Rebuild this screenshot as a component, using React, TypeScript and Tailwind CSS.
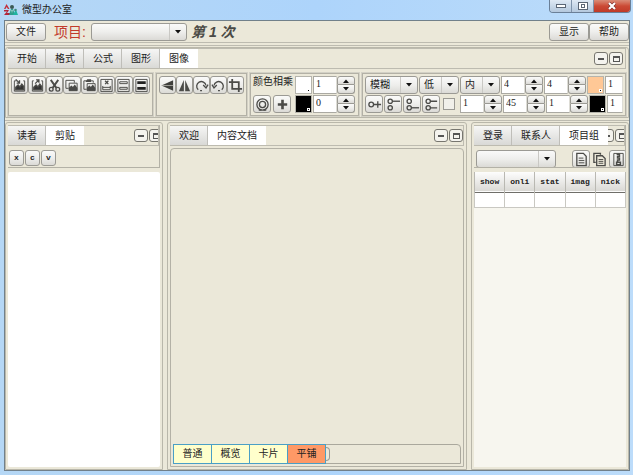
import React from "react";
import clsx from "clsx";

const raised = "border border-[#9b9a94] rounded-[3px] bg-linear-to-b from-[#fafaf9] via-[#eeeeec] to-[#dbdad6]";

const Button: React.FC<{ label: string; className?: string; children: React.ReactNode }> = ({ label, className, children }) => (
  <button type="button" aria-label={label} className={clsx(raised, "flex shrink-0 items-center justify-center", className)}>
    {children}
  </button>
);

const Arrow: React.FC<{ up?: boolean }> = ({ up }) => (
  <svg viewBox="0 0 6 4" className="h-1 w-1.5" fill="#111">
    <path d={up ? "M0 4L3 0.5L6 4Z" : "M0 0L3 3.5L6 0Z"} />
  </svg>
);

const Select: React.FC<{ label: string; value?: string; className: string }> = ({ label, value = "", className }) => (
  <div className={clsx(raised, "relative flex h-[18px] shrink-0", className)}>
    <select aria-label={label} className="w-full appearance-none bg-transparent pr-4 pl-1 text-[10px] leading-4 outline-none">
      <option>{value}</option>
    </select>
    <span className="pointer-events-none absolute inset-y-0 right-0 flex w-[17px] items-center justify-center border-l border-[#c9c8c4]">
      <Arrow />
    </span>
  </div>
);

const Field: React.FC<{ label: string; value: string }> = ({ label, value }) => (
  <input
    aria-label={label}
    defaultValue={value}
    className="h-[18px] w-6 min-w-0 border border-[#aaa9a2] border-r-[#dddcd5] bg-white px-0.5 pb-1 font-['Liberation_Serif',serif] text-[10px] leading-3 outline-none"
  />
);

const Spinner: React.FC<{ label: string; value: string }> = ({ label, value }) => (
  <div className="flex h-[18px] w-[42px] shrink-0">
    <Field label={label} value={value} />
    <div className="flex w-[18px] shrink-0 flex-col">
      <Button label={label + " +"} className="h-[9px] rounded-b-none">
        <Arrow up />
      </Button>
      <Button label={label + " -"} className="h-[9px] rounded-t-none border-t-0">
        <Arrow />
      </Button>
    </div>
  </div>
);

const Swatch: React.FC<{ label: string; color: string }> = ({ label, color }) => (
  <button type="button" aria-label={label} className={clsx("flex h-[18px] w-[17px] shrink-0 items-end justify-end border border-[#b5b4ac] p-px", color)}>
    <span className="size-[3px] border border-white bg-black" />
  </button>
);

const WindowButtons: React.FC<{ className?: string }> = ({ className }) => (
  <div className={clsx("flex shrink-0 items-center gap-px overflow-hidden", className)}>
    <button type="button" aria-label="最小化" className="flex h-[13px] w-3.5 shrink-0 items-center justify-center rounded-[3px] border border-[#77766f] bg-[#f4f3ee]">
      <span className="h-0.5 w-1.5 bg-[#555]" />
    </button>
    <button type="button" aria-label="最大化" className="flex h-[13px] w-3.5 shrink-0 items-center justify-center rounded-[3px] border border-[#77766f] bg-[#f4f3ee]">
      <span className="h-1.5 w-[7px] border border-t-2 border-[#555]" />
    </button>
  </div>
);

const Tabs: React.FC<{ tabs: string[]; active: number; buttons?: string }> = ({ tabs, active, buttons }) => (
  <div className="flex h-[21px] border-y border-r border-[#bdbbb0]">
    <div role="tablist" className="flex shrink-0">
      {tabs.map((tab, i) => (
        <button
          key={tab}
          type="button"
          role="tab"
          aria-selected={i === active}
          className={clsx(
            "border-r pr-2 pl-[9px] text-[10px] leading-4",
            i === active ? "border-white bg-white" : "border-[#bfbeb9] bg-linear-to-b from-[#f6f6f5] to-[#d9d9d6]"
          )}
        >
          {tab}
        </button>
      ))}
    </div>
    <div className="flex min-w-0 flex-1 justify-end overflow-hidden">
      <WindowButtons className={buttons} />
    </div>
  </div>
);

const Glyph: React.FC<{ children: React.ReactNode }> = ({ children }) => (
  <svg viewBox="0 0 16 16" className="size-[15px] shrink-0" fill="none" stroke="#4b4b48" strokeWidth="1.4">
    {children}
  </svg>
);

const picture = "M4 12.5V10L6.5 7.5L8.5 9.5L10.5 6.5L12.5 9V12.5Z";

const editIcons = [
  { label: "插入图片", icon: <><path d="M5 3H2.5V14H13.5V3H12" strokeWidth="1" /><path d={picture} fill="#333" /><path d="M4 1.5L8 5.5M8 2.5V5.5H5" /></> },
  { label: "导出图片", icon: <><path d="M4 3H2.5V14H13.5V3H12" strokeWidth="1" /><path d={picture} fill="#333" /><path d="M5.5 6L9.5 2M6.5 2H9.5V5" /></> },
  { label: "剪切", icon: <><path d="M4 2L10 10.5M12 2L6 10.5" strokeWidth="2" /><circle cx="4.5" cy="12" r="2" /><circle cx="11.5" cy="12" r="2" /></> },
  { label: "复制", icon: <><path d="M5 11H2V2.5H11V5" strokeWidth="1" /><path d="M5.5 5.5H14V13.5H5.5Z" strokeWidth="1" /><path d="M6 13V10.5L8 9L9.5 10.5L11.5 8L13.5 11V13Z" fill="#4b4b48" /></> },
  { label: "粘贴", icon: <><path d="M5 12H2V3H12V5" strokeWidth="1" /><path d="M5 3.5H9V2H6Z" fill="#4b4b48" /><path d="M5.5 6H14V13.5H5.5Z" strokeWidth="1" /><path d="M6 13V10.5L8 9L9.5 10.5L11.5 8L13.5 11V13Z" fill="#4b4b48" /></> },
  { label: "删除", icon: <><path d="M2 1.5H14V14.5H2Z" strokeWidth="1" /><path d="M6.5 3L10 6.5M10 3L6.5 6.5" /><path d="M4 8.5V12.5H12V8.5M4 10H12" strokeWidth="1" /></> },
  { label: "行距", icon: <><path d="M2 1.5H14V14.5H2Z" strokeWidth="1" /><path d="M4 4H12V6H4ZM4 10H12V12H4Z" strokeWidth="1" /></> },
  { label: "边框", icon: <><path d="M2 1.5H14V14.5H2Z" strokeWidth="1" /><path d="M3.5 5H12.5M3.5 11H12.5" strokeWidth="3" stroke="#222" /></> },
];

const transformIcons = [
  { label: "垂直翻转", icon: <><path d="M14 2.5V13.5L1.5 8Z" fill="#3f3f3c" stroke="none" /><path d="M2 8H14" stroke="#a3a39e" strokeWidth="1" /></> },
  { label: "水平翻转", icon: <><path d="M7.3 2V14H2Z" fill="#4b4b48" stroke="none" /><path d="M8.7 2V14H14Z" fill="#4b4b48" stroke="none" /></> },
  { label: "向右旋转", icon: <><path d="M4.5 12.5A5 5 0 1 1 12.8 8" /><path d="M9.8 7.5L12.8 10.5L15 7" /><path d="M6.5 13.5H8.5" /></> },
  { label: "向左旋转", icon: <><path d="M11.5 12.5A5 5 0 1 0 3.2 8" /><path d="M6.2 7.5L3.2 10.5L1 7" /><path d="M7.5 13.5H9.5" /></> },
  { label: "裁剪", icon: <path d="M4.5 1V11.5H15M1 4.5H11.5V15" strokeWidth="1.9" /> },
];

const nodeIcons = [
  { label: "添加节点", icon: <><circle cx="4.5" cy="8" r="2.5" /><path d="M7 8H15M11.5 4.5V11.5" /></> },
  { label: "上节点", icon: <><circle cx="4.5" cy="4.5" r="2.3" /><circle cx="4.5" cy="11.5" r="2.3" /><path d="M7 4.5H15" /></> },
  { label: "下节点", icon: <><circle cx="4.5" cy="4.5" r="2.3" /><circle cx="4.5" cy="11.5" r="2.3" /><path d="M7 11.5H15" /></> },
  { label: "双节点", icon: <><circle cx="4.5" cy="4.5" r="2.3" /><circle cx="4.5" cy="11.5" r="2.3" /><path d="M7 4.5H14M7 11.5H14" /></> },
];

const IconRow: React.FC<{ icons: { label: string; icon: React.ReactNode }[] }> = ({ icons }) => (
  <div className="flex">
    {icons.map(({ label, icon }) => (
      <Button key={label} label={label} className="h-[18px] flex-1">
        <Glyph>{icon}</Glyph>
      </Button>
    ))}
  </div>
);

const group = "border border-[#b3b1a6] shadow-[0_0_0_1px_#d3d1c6] p-0.5";
const panel = "flex min-w-0 flex-col rounded-t-[3px] border border-[#b9b7aa] p-0.5";

const TitleBar: React.FC = () => (
  <header className="flex h-5 shrink-0 items-start justify-between px-0.5">
    <h1 className="flex items-center gap-1 pt-0.5 pl-0.5 text-[10px] leading-4">
      <svg viewBox="0 0 14 12" className="h-3 w-3.5">
        <path d="M0 5L2.5 0L5.5 5H4L2.5 3L1.5 5Z" fill="#c22f3b" />
        <path d="M0 6H5L3 9H6V11H0L3 7.5H0Z" fill="#b3263a" />
        <circle cx="8" cy="3" r="2" fill="#3b5a55" />
        <path d="M5 11L7 5H9L11 11Z" fill="#2e9e8b" />
        <circle cx="11.5" cy="6" r="1.3" fill="#3c8c7b" />
        <path d="M9 11L11 7H12.5L14 11Z" fill="#1fb3a0" />
        <path d="M7.5 6L8.5 6L8 9Z" fill="#fff" />
      </svg>
      微型办公室
    </h1>
    <div className="flex h-[13px] overflow-hidden rounded-b-[4px] border border-t-0 border-[#6a7f97]">
      <button type="button" aria-label="最小化窗口" className="flex w-[22px] items-center justify-center border-r border-[#7f93ab] bg-linear-to-b from-[#dfe9f4] to-[#b4c8dd]">
        <span className="h-1 w-2.5 border border-[#5b6675] bg-white" />
      </button>
      <button type="button" aria-label="最大化窗口" className="flex w-[22px] items-center justify-center border-r border-[#7f93ab] bg-linear-to-b from-[#dfe9f4] to-[#b4c8dd]">
        <span className="flex h-2 w-2.5 items-center justify-center border border-[#5b6675] bg-white">
          <span className="h-1 w-1 border border-[#5b6675]" />
        </span>
      </button>
      <button type="button" aria-label="关闭窗口" className="flex w-9 items-center justify-center bg-linear-to-b from-[#d98c78] via-[#cb4a35] to-[#c03a28]">
        <svg viewBox="0 0 10 8" className="h-2 w-2.5">
          <path d="M2 1L8 7M8 1L2 7" stroke="#7c2c28" strokeWidth="3.4" />
          <path d="M2 1L8 7M8 1L2 7" stroke="#fff" strokeWidth="2.2" />
        </svg>
      </button>
    </div>
  </header>
);

const Ribbon: React.FC = () => (
  <section className="shrink-0 rounded-t-[3px] border border-[#b9b7aa] px-0.5">
    <Tabs tabs={["开始", "格式", "公式", "图形", "图像"]} active={4} buttons="pr-0.5" />
    <div className="flex gap-[3px] pt-1 pb-px">
      <div className={clsx(group, "w-[145px] shrink-0")}>
        <IconRow icons={editIcons} />
      </div>
      <div className={clsx(group, "w-[91px] shrink-0")}>
        <IconRow icons={transformIcons} />
      </div>
      <div className={clsx(group, "flex w-[109px] shrink-0 gap-px")}>
        <div className="flex w-[41px] flex-col gap-px">
          <span className="h-[18px] text-[10px] leading-3 whitespace-nowrap">颜色相乘</span>
          <div className="flex gap-0.5">
            <Button label="圆环" className="size-[18px]">
              <Glyph>
                <circle cx="8" cy="8" r="6" />
                <circle cx="8" cy="8" r="3.3" />
                <path d="M4 14H7M9 14H12" />
              </Glyph>
            </Button>
            <Button label="添加" className="size-[18px]">
              <Glyph>
                <path d="M8 3V13M3 8H13" strokeWidth="2.8" />
              </Glyph>
            </Button>
          </div>
        </div>
        <div className="flex flex-col gap-px">
          <Swatch label="颜色一" color="bg-white" />
          <Swatch label="颜色二" color="bg-black" />
        </div>
        <div className="flex flex-col gap-px">
          <Spinner label="数值一" value="1" />
          <Spinner label="数值二" value="0" />
        </div>
      </div>
      <div className={clsx(group, "flex min-w-0 flex-1 flex-col gap-px")}>
        <div className="flex gap-px">
          <Select label="效果" value="模糊" className="w-[53px]" />
          <Select label="质量" value="低" className="w-10" />
          <Select label="位置" value="内" className="w-10" />
          <Spinner label="横向" value="4" />
          <Spinner label="纵向" value="4" />
          <Swatch label="高光颜色" color="bg-[#ffc896]" />
          <Field label="高光透明度" value="1" />
        </div>
        <div className="flex gap-px">
          <div className="flex w-[94px] shrink-0 items-center gap-px">
            {nodeIcons.map(({ label, icon }) => (
              <Button key={label} label={label} className="size-[18px]">
                <Glyph>{icon}</Glyph>
              </Button>
            ))}
            <input type="checkbox" aria-label="启用" className="ml-0.5 size-3 shrink-0 appearance-none border border-[#9b9a94] bg-[#f1f0ea]" />
          </div>
          <Spinner label="强度" value="1" />
          <Spinner label="角度" value="45" />
          <Spinner label="距离" value="1" />
          <Swatch label="阴影颜色" color="bg-black" />
          <Field label="阴影透明度" value="1" />
        </div>
      </div>
    </div>
  </section>
);

const ClipPanel: React.FC = () => (
  <section className={clsx(panel, "w-[158px] shrink-0")}>
    <div className="h-[43px] border-r border-b border-[#b3b1a6]">
      <Tabs tabs={["读者", "剪贴"]} active={1} buttons="w-6" />
      <div className="flex gap-px pt-1 pl-px font-['Liberation_Mono',monospace] text-[8px] font-bold">
        {["x", "c", "v"].map((key) => (
          <Button key={key} label={key} className="h-4 w-[15px]">
            {key}
          </Button>
        ))}
      </div>
    </div>
    <div className="mt-1 flex-1 rounded-[2px] bg-white" />
  </section>
);

const views = ["普通", "概览", "卡片", "平铺"];

const DocumentPanel: React.FC = () => (
  <section className={clsx(panel, "flex-1")}>
    <Tabs tabs={["欢迎", "内容文档"]} active={1} />
    <div className="mt-0.5 flex flex-1 flex-col justify-end rounded-t-[4px] border border-[#b3b1a6] px-0.5 pb-0.5">
      <div className="flex h-5 rounded-tr-[4px] border border-[#aaa89d]">
        {views.map((view) => (
          <button
            key={view}
            type="button"
            className={clsx("-my-px -ml-px w-[39px] shrink-0 border border-[#4a9fc6] text-[10px] leading-4", view === "平铺" ? "bg-[#ff9966]" : "bg-[#ffffcc]")}
          >
            {view}
          </button>
        ))}
        <span className="my-0.5 w-1 rounded-r-[4px] border border-l-0 border-[#9b9a94]" />
      </div>
    </div>
  </section>
);

const TeamPanel: React.FC = () => (
  <section className={clsx(panel, "w-[158px] shrink-0")}>
    <div className="h-[43px] overflow-hidden border-r border-b border-[#b3b1a6]">
      <Tabs tabs={["登录", "联系人", "项目组"]} active={2} buttons="w-6 -ml-2" />
      <div className="flex gap-0.5 pt-1 pl-0.5">
        <Select label="项目组" className="mr-3.5 w-20" />
        <Button label="文档" className="size-[18px]">
          <Glyph>
            <path d="M3 1.5H10L13 4.5V14.5H3Z" />
            <path d="M5 6.5H10M5 9H11M5 11.5H11" strokeWidth="1" />
          </Glyph>
        </Button>
        <button type="button" aria-label="复制文档" className="shrink-0">
          <Glyph>
            <path d="M4 11H2V1.5H9V3" />
            <path d="M5 4H11L14 7V14.5H5Z" />
            <path d="M7 8H12M7 10H12M7 12H12" strokeWidth="1" />
          </Glyph>
        </button>
        <Button label="压缩" className="size-[18px]">
          <Glyph>
            <path d="M3 1.5H13V14.5H3Z" strokeWidth="1" />
            <path d="M6 2.5H9V4.5H7V6.5H9V8.5H7V10.5M6 11H10V13.5H6Z" strokeWidth="1.6" />
          </Glyph>
        </Button>
      </div>
    </div>
    <div className="mt-1 flex-1 bg-[#f7f6ef]">
      <table className="w-full table-fixed border-collapse font-['Liberation_Mono',monospace] text-[8px] font-bold">
        <thead>
          <tr className="h-5 border-b border-[#6f6e69] bg-linear-to-b from-[#fdfdfd] to-[#dad9d5]">
            {["show", "onli", "stat", "imag", "nick"].map((name) => (
              <th key={name} className="border-x border-[#b9b8b2] p-0">
                {name}
              </th>
            ))}
          </tr>
        </thead>
        <tbody>
          <tr className="h-[15px] border-b border-[#c9c8c2] bg-white">
            {[0, 1, 2, 3, 4].map((cell) => (
              <td key={cell} className="border-x border-[#c9c8c2]" />
            ))}
          </tr>
        </tbody>
      </table>
    </div>
  </section>
);

export default function App() {
  return (
    <div className="flex min-h-screen flex-col bg-linear-to-r from-[#b5d7f5] via-[#add4fb] to-[#bcdcfa] font-['Liberation_Sans','Noto_Sans_CJK_SC',sans-serif] text-[#222]">
      <TitleBar />
      <main className="mr-[3px] mb-1 ml-1 flex flex-1 flex-col border border-[#71808a] bg-[#ebe8d9]">
        <nav className="flex h-[22px] shrink-0 items-center border-b border-[#bdbbb0] pl-px">
          <Button label="文件" className="h-[18px] w-10 text-[10px]">
            文件
          </Button>
          <span className="ml-2 w-[37px] shrink-0 text-[14px] leading-4 whitespace-nowrap text-[#c23a2b]">项目:</span>
          <Select label="项目" className="w-24" />
          <em className="ml-1 text-[14px] leading-4 font-bold text-[#4a4a45]">第 1 次</em>
          <div className="ml-auto flex">
            <Button label="显示" className="h-[18px] w-10 text-[10px]">
              显示
            </Button>
            <Button label="帮助" className="h-[18px] w-10 text-[10px]">
              帮助
            </Button>
          </div>
        </nav>
        <div className="mt-0.5 border-t border-[#bdbbb0] pt-px">
          <Ribbon />
        </div>
        <div className="mt-0.5 flex flex-1 gap-1 border-t border-[#bdbbb0] pt-px">
          <ClipPanel />
          <DocumentPanel />
          <TeamPanel />
        </div>
      </main>
    </div>
  );
}
